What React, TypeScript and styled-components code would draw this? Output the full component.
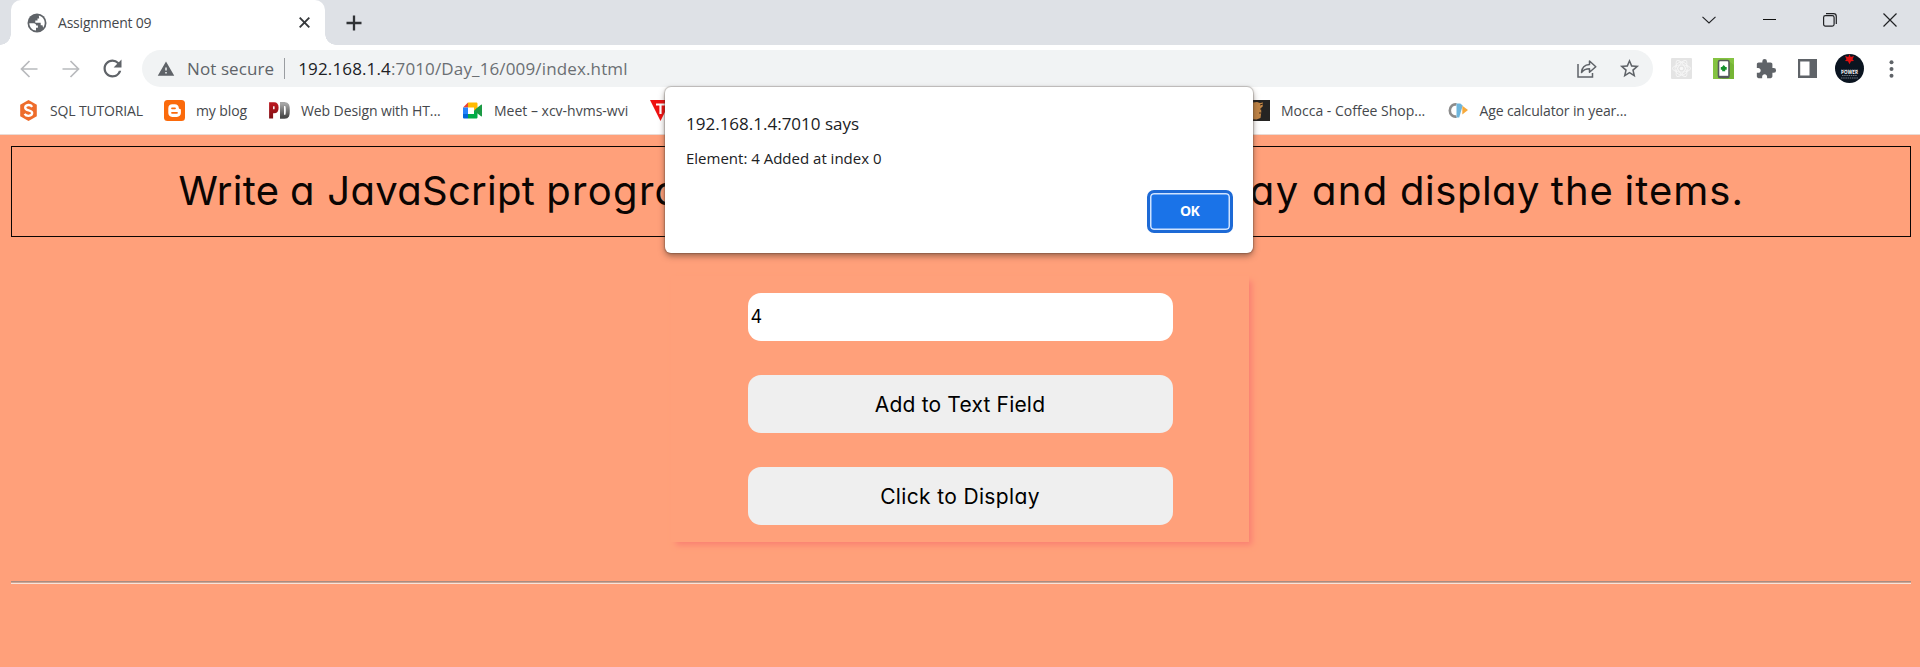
import React from 'react';
import styled, { createGlobalStyle } from 'styled-components';
import { MdRefresh, MdWarning, MdExtension, MdStarBorder } from 'react-icons/md';

const GlobalStyle = createGlobalStyle`
  * { box-sizing: border-box; }
  body { margin: 0; background: #ffa07a; overflow: hidden; }
  svg { display: block; flex: none; }
`;

const uiFont = `"Open Sans", "Noto Sans", sans-serif`;
const pageFont = `Inter, "Open Sans", sans-serif`;

const Window = styled.div`
  position: relative;
  display: flex;
  flex-direction: column;
  height: 667px;
  font-family: ${uiFont};
`;

/* ---- tab strip ---- */
const TabStrip = styled.div`
  display: flex;
  height: 45px;
  padding-left: 11px;
  background: #dee1e6;
`;
const Tab = styled.div`
  position: relative;
  display: flex;
  align-items: center;
  width: 314px;
  padding: 0 15px 0 16px;
  background: #fff;
  border-radius: 10px 10px 0 0;
  &::before, &::after {
    content: '';
    position: absolute;
    bottom: 0;
    width: 11px;
    height: 11px;
  }
  &::before { left: -11px; background: radial-gradient(circle at 0 0, transparent 10.5px, #fff 11px); }
  &::after { right: -11px; background: radial-gradient(circle at 100% 0, transparent 10.5px, #fff 11px); }
`;
const TabTitle = styled.span`
  flex: 1;
  margin-left: 11px;
  font-size: 14px;
  line-height: 20px;
  letter-spacing: -0.2px;
  color: #45484c;
`;
const NewTab = styled.div`
  display: flex;
  align-items: center;
  margin-left: 21px;
`;
const WindowControls = styled.div`
  display: flex;
  align-items: flex-start;
  margin-left: auto;
`;
const WindowButton = styled.div`
  display: flex;
  align-items: center;
  justify-content: center;
  width: 60.3px;
  height: 39px;
`;

/* ---- toolbar ---- */
const Toolbar = styled.div`
  display: flex;
  align-items: center;
  height: 47px;
  padding: 0 7.5px;
  background: #fff;
`;
const ToolSlot = styled.div<{ $color?: string }>`
  display: flex;
  align-items: center;
  justify-content: center;
  width: 42px;
  height: 42px;
  color: ${p => p.$color ?? '#5f6368'};
`;
const Omnibox = styled.div`
  display: flex;
  align-items: center;
  flex: 1;
  height: 37px;
  margin: 0 7.5px 0 8.5px;
  padding: 0 3px 0 15px;
  border-radius: 19px;
  background: #f1f3f4;
  color: #5f6368;
  font-size: 17px;
`;
const Security = styled.span`
  margin-left: 12px;
  letter-spacing: 0.1px;
`;
const Divider = styled.span`
  width: 1px;
  height: 21px;
  margin: 0 13px 0 10px;
  background: #9a9da1;
`;
const Url = styled.span`
  flex: 1;
  letter-spacing: 0.14px;
  color: #6b6f73;
`;
const Host = styled.span`color: #202124;`;
const Avatar = styled.div`
  display: flex;
  width: 29px;
  height: 29px;
  border-radius: 50%;
  overflow: hidden;
  background: #0a1420;
`;

/* ---- bookmarks ---- */
const BookmarkBar = styled.div`
  display: flex;
  align-items: center;
  height: 43px;
  padding: 0 0 5px 18px;
  background: #fff;
  border-bottom: 1px solid #eadbd5;
`;
const Bookmark = styled.div<{ $width: number; $spacing?: number }>`
  display: flex;
  align-items: center;
  gap: 11px;
  width: ${p => p.$width}px;
  font-size: 14px;
  letter-spacing: ${p => p.$spacing ?? 0}px;
  white-space: nowrap;
  color: #45484c;
`;

/* ---- page ---- */
const Page = styled.main`
  flex: 1;
  display: flex;
  flex-direction: column;
  align-items: center;
  padding: 11px 9px 0 11px;
  background: #ffa07a;
  color: #0a0503;
  font-family: ${pageFont};
  font-feature-settings: 'cv11';
`;
const Heading = styled.h1`
  display: flex;
  justify-content: space-between;
  align-self: stretch;
  height: 91px;
  margin: 0;
  padding: 0 166px 0 166.5px;
  border: 1px solid #0a0503;
  font-size: 40px;
  font-weight: 400;
  line-height: 88px;
  white-space: pre;
`;
const Word = styled.span<{ $spacing: number; $gap?: number }>`
  letter-spacing: ${p => p.$spacing}px;
  word-spacing: ${p => p.$gap ?? 0}px;
`;
const Card = styled.section`
  display: flex;
  flex-direction: column;
  align-items: center;
  gap: 34px;
  width: 578px;
  height: 266px;
  margin: 39px 2px 0 0;
  padding-top: 17px;
  box-shadow: 4px 4px 6px -1px salmon;
`;
const Field = styled.input`
  width: 425px;
  height: 48px;
  padding: 0 3px 1px;
  border: 0;
  border-radius: 13px;
  outline: 0;
  background: #fff;
  color: #000;
  font: 400 18px ${pageFont};
`;
const PageButton = styled.button<{ $spacing: number }>`
  width: 425px;
  height: 58px;
  padding: 0;
  border: 0;
  border-radius: 13px;
  background: #efefef;
  color: #000;
  font: 400 21px ${pageFont};
  font-feature-settings: 'cv11';
  letter-spacing: ${p => p.$spacing}px;
`;
const Rule = styled.hr`
  align-self: stretch;
  height: 3px;
  margin: 39px 0 0;
  border: 0;
  border-top: 1px solid #a98b80;
  border-bottom: 1px solid #f7e4da;
  background: #cda592;
`;

/* ---- alert dialog ---- */
const Dialog = styled.div`
  position: absolute;
  top: 87px;
  left: 665px;
  display: flex;
  flex-direction: column;
  width: 588px;
  height: 166px;
  padding: 25px 20px 20px 21px;
  border-radius: 6px;
  background: #fff;
  box-shadow: 0 0 1px 1px rgba(60, 50, 45, 0.25), 0 3px 6px rgba(60, 40, 30, 0.5);
  color: #202124;
`;
const DialogTitle = styled.div`
  font-size: 17px;
  line-height: 24px;
`;
const DialogMessage = styled.div`
  margin-top: 11px;
  font-size: 15px;
  line-height: 22px;
`;
const OkButton = styled.button`
  align-self: flex-end;
  width: 86px;
  height: 43px;
  margin-top: auto;
  padding: 0 1px 2px 0;
  border: 3px solid #1d6ad6;
  border-radius: 7px;
  background: #1a73e8;
  box-shadow: inset 0 0 0 1.5px #cfe3ff;
  color: #fff;
  font: 700 14px ${uiFont};
  letter-spacing: -0.7px;
`;

const GlobeIcon = () => (
  <svg width="20" height="20" viewBox="0 0 20 20">
    <circle cx="10" cy="10" r="9.500" fill="#5f6368" />
    <path d="M2.300 10.200l4.500.1c1.500 0 2.300 1 2.300 2.200h1.800v2.200H9v2.800C5.300 17.300 2.500 14.300 2.300 10.200z" fill="#fff" />
    <path d="M11.800 2.500c3.400.8 5.900 3.700 5.900 7.400 0 1.800-.6 3.500-1.600 4.800l-.6-2.500h-1.800V9.700H8.300V7.600h2.200V5.400h1.700z" fill="#fff" />
  </svg>
);
const ArrowIcon = ({ flip }: { flip?: boolean }) => (
  <svg width="18" height="18" viewBox="0 0 18 18" fill="none" stroke="currentColor" strokeWidth="1.7"
    transform={flip ? 'scale(-1 1)' : undefined}>
    <path d="M17.5 9H2M9.5 1 1.5 9l8 8" />
  </svg>
);
const ShareIcon = () => (
  <svg width="20" height="19" viewBox="0 0 20 19" fill="none" stroke="currentColor" strokeWidth="1.5">
    <path d="M1 5v13h14.5v-4" />
    <path d="M4.5 13.5c.4-5 3-7.600 8-7.900V2l6.300 5.700-6.300 5.600V9.800c-3.600 0-6 1-8 3.700z" strokeLinejoin="round" />
  </svg>
);
const ReactExtension = () => (
  <svg width="21" height="21" viewBox="0 0 21 21">
    <rect width="21" height="21" rx="1" fill="#e4e4e4" />
    <g fill="none" stroke="#f6f6f6" strokeWidth=".9">
      <ellipse cx="10.500" cy="10.500" rx="9" ry="3.600" />
      <ellipse cx="10.500" cy="10.500" rx="9" ry="3.600" transform="rotate(60 10.500 10.500)" />
      <ellipse cx="10.500" cy="10.500" rx="9" ry="3.600" transform="rotate(120 10.500 10.500)" />
      <circle cx="10.500" cy="10.500" r="6.500" />
    </g>
    <circle cx="10.500" cy="10.500" r="1.800" fill="#f8f8f8" />
  </svg>
);
const PhoneExtension = () => (
  <svg width="21" height="21" viewBox="0 0 21 21">
    <rect width="21" height="21" fill="#84c341" />
    <path d="M17 4l4 3v14H9z" fill="#76b535" />
    <rect x="5.500" y="2.500" width="10.500" height="17" rx="1.500" fill="#fff" stroke="#55595c" strokeWidth="1.600" />
    <path d="M5.500 18.800H16" stroke="#55595c" strokeWidth="2" />
    <path d="M10.700 7l1.800 2h1.200v2.800h-1.500v1.400H9.200v-1.400H7.800V9H9z" fill="#14902c" />
  </svg>
);
const SidePanelIcon = () => (
  <svg width="19" height="19" viewBox="0 0 19 19">
    <rect width="19" height="19" fill="#5f6368" />
    <rect x="2.200" y="2.500" width="9.300" height="14" fill="#fff" />
  </svg>
);
const AvatarArt = () => (
  <svg width="29" height="29" viewBox="0 0 29 29">
    <path d="M14.500 0l1.200 3 3.300-1-1.500 3.200 1.500 1.800-3 .2-1.500 3-1.500-3-3-.2L11.500 5.200 10 2l3.300 1z" fill="#e01010" />
    <path d="M6 16h17M7 21.500h15M6 24h17" stroke="#77808a" strokeWidth=".9" strokeDasharray="1.500 .7" />
    <text x="14.500" y="20.300" fill="#fff" fontFamily="Open Sans" fontSize="4.500" fontWeight="700" textAnchor="middle" textLength="17">POWER</text>
  </svg>
);
const MenuDots = () => (
  <svg width="5" height="18" viewBox="0 0 5 18" fill="currentColor">
    <circle cx="2.500" cy="2.300" r="2" /><circle cx="2.500" cy="9" r="2" /><circle cx="2.500" cy="15.700" r="2" />
  </svg>
);

const SqlIcon = () => (
  <svg width="21" height="21" viewBox="0 0 21 21">
    <path d="M10.500 0l8.300 4.800v11.400L10.500 21l-8.300-4.800V4.800z" fill="#ee6c2b" />
    <path d="M14.200 6.800c-1-1.500-2.500-1.900-4-1.800-1.800.2-3 1.200-3 2.700 0 3.600 7 1.800 7 5.400 0 1.600-1.500 2.600-3.500 2.700-1.700.1-3.200-.5-4.100-2" fill="none" stroke="#fff" strokeWidth="2.300" />
  </svg>
);
const BloggerIcon = () => (
  <svg width="21" height="21" viewBox="0 0 21 21">
    <rect width="21" height="21" rx="3.500" fill="#fb6a0b" />
    <path d="M4.300 8.200c0-2.300 1.600-3.900 3.900-3.900h2.700c2.200 0 3.800 1.500 3.900 3.500 0 .9.500 1.100 1.100 1.100.7 0 1 .4 1 1.100v3c0 2.200-1.700 3.900-4 3.900H8.200c-2.300 0-3.900-1.700-3.900-3.900z" fill="#fff" />
    <path d="M8 8.300h3M8 12.800h5" stroke="#fb6a0b" strokeWidth="1.800" strokeLinecap="round" />
  </svg>
);
const PdIcon = () => (
  <svg width="21" height="21" viewBox="0 0 21 21">
    <defs>
      <linearGradient id="pdRed" x2="0" y2="1"><stop stopColor="#b8161e" /><stop offset="1" stopColor="#7e1015" /></linearGradient>
      <linearGradient id="pdGray" x2="0" y2="1"><stop stopColor="#a5a5a5" /><stop offset="1" stopColor="#484848" /></linearGradient>
    </defs>
    <path d="M2.100 18.500V4.200h3c2 0 2.500 1 2.500 3.500s-.5 3.600-2.500 3.600h-3" fill="none" stroke="url(#pdRed)" strokeWidth="4" />
    <path d="M13 4h2.500c2.800 0 3.300 1.500 3.300 6.500s-.5 6.300-3.300 6.300H13z" fill="none" stroke="url(#pdGray)" strokeWidth="4" />
  </svg>
);
const MeetIcon = () => (
  <svg width="21" height="21" viewBox="0 0 21 21">
    <path d="M1 7.500L6 2.500v5z" fill="#ea4335" />
    <path d="M1 7.500h5V14H1z" fill="#2684fc" />
    <path d="M1 14h5v4.500H2.300C1.500 18.500 1 18 1 17.200z" fill="#0066da" />
    <path d="M6 2.500h8c1 0 1.500.5 1.500 1.300V9L12 10.500v-3H6z" fill="#ffba00" />
    <path d="M6 14h6v-3.500l3.500 1.500v5.200c0 .8-.5 1.300-1.500 1.300H6z" fill="#00ac47" />
    <path d="M12 10.500l3.500-3L19 4.800c.6-.4 1-.1 1 .5v10.400c0 .6-.5.900-1 .5L15.500 13.500z" fill="#1b9a44" />
  </svg>
);
const TriangleIcon = () => (
  <svg width="21" height="21" viewBox="0 0 21 21">
    <path d="M0 0h21L10.500 21z" fill="#ee1111" />
    <path d="M6 4.500h9M10.500 4.500V14" stroke="#fff" strokeWidth="2.200" />
  </svg>
);
const MoccaIcon = () => (
  <svg width="21" height="21" viewBox="0 0 21 21">
    <rect width="21" height="21" fill="#252423" />
    <path d="M0 3l8-1 3 1 3-.5-.3 4-1.700 1.500.3 4L11.500 18l-4 1.500-7.500-.5z" fill="#c08546" />
    <path d="M11 5l3-1M11 9h1.500M10 13h2.500" stroke="#3a2717" />
  </svg>
);
const AgeIcon = () => (
  <svg width="21" height="21" viewBox="0 0 21 21">
    <path d="M8.500 4.500C5 3.700 1.800 6.500 1.800 10.500s3.200 6.800 6.700 6" fill="none" stroke="#8c8c8c" strokeWidth="2.600" />
    <path d="M8.500 3.500h3.800l2.400 2-3.500 12H8.500z" fill="#6db5dc" />
    <path d="M14.300 5.800L20 10l-5.700 4.500z" fill="#f6a93b" />
  </svg>
);

const bookmarks = [
  { icon: <SqlIcon />, label: 'SQL TUTORIAL', width: 146, spacing: -0.15 },
  { icon: <BloggerIcon />, label: 'my blog', width: 105, spacing: -0.1 },
  { icon: <PdIcon />, label: 'Web Design with HT...', width: 193, spacing: -0.1 },
  { icon: <MeetIcon />, label: 'Meet – xcv-hvms-wvi', width: 188, spacing: 0 },
  { icon: <TriangleIcon />, label: '', width: 599, spacing: 0 },
  { icon: <MoccaIcon />, label: 'Mocca - Coffee Shop...', width: 198.500, spacing: 0 },
  { icon: <AgeIcon />, label: 'Age calculator in year...', width: 200, spacing: -0.13 },
];

export default function App() {
  return (
    <Window>
      <GlobalStyle />
      <TabStrip>
        <Tab>
          <GlobeIcon />
          <TabTitle>Assignment 09</TabTitle>
          <svg width="11" height="11" viewBox="0 0 11 11" stroke="#35383b" strokeWidth="1.900"><path d="M.7.7l9.600 9.600M10.300.7L.7 10.300" /></svg>
        </Tab>
        <NewTab>
          <svg width="16" height="16" viewBox="0 0 16 16" stroke="#303336" strokeWidth="2.300"><path d="M8 .5v15M.5 8h15" /></svg>
        </NewTab>
        <WindowControls>
          <WindowButton><svg width="14" height="8" viewBox="0 0 14 8" fill="none" stroke="#202124" strokeWidth="1.100"><path d="M.5.8L7 7 13.500.8" /></svg></WindowButton>
          <WindowButton><svg width="13" height="1"><rect width="13" height="1" fill="#111" /></svg></WindowButton>
          <WindowButton>
            <svg width="14" height="14" viewBox="0 0 14 14" fill="none" stroke="#202124" strokeWidth="1.200">
              <rect x=".6" y="2.600" width="10.500" height="10.500" rx="1.800" /><path d="M3 .7h7.500c1.800 0 2.800 1.100 2.800 2.800V11" />
            </svg>
          </WindowButton>
          <WindowButton><svg width="14" height="14" viewBox="0 0 14 14" stroke="#202124" strokeWidth="1.200"><path d="M.5.5l13 13M13.500.5l-13 13" /></svg></WindowButton>
        </WindowControls>
      </TabStrip>

      <Toolbar>
        <ToolSlot $color="#b8babd"><ArrowIcon /></ToolSlot>
        <ToolSlot $color="#b8babd"><ArrowIcon flip /></ToolSlot>
        <ToolSlot><MdRefresh size={27} /></ToolSlot>
        <Omnibox>
          <MdWarning size={18} />
          <Security>Not secure</Security>
          <Divider />
          <Url><Host>192.168.1.4</Host>:7010/Day_16/009/index.html</Url>
          <ToolSlot><ShareIcon /></ToolSlot>
          <ToolSlot><MdStarBorder size={23} /></ToolSlot>
        </Omnibox>
        <ToolSlot><ReactExtension /></ToolSlot>
        <ToolSlot><PhoneExtension /></ToolSlot>
        <ToolSlot><MdExtension size={22} /></ToolSlot>
        <ToolSlot><SidePanelIcon /></ToolSlot>
        <ToolSlot><Avatar><AvatarArt /></Avatar></ToolSlot>
        <ToolSlot><MenuDots /></ToolSlot>
      </Toolbar>

      <BookmarkBar>
        {bookmarks.map((b, i) => (
          <Bookmark key={i} $width={b.width} $spacing={b.spacing}>{b.icon}{b.label}</Bookmark>
        ))}
      </BookmarkBar>

      <Page>
        <Heading>
          <span>
            <Word $spacing={0.3} $gap={-1}>Write </Word>
            <Word $spacing={2} $gap={-2.5}>a </Word>
            <Word $spacing={0.3} $gap={-0.5}>JavaScript </Word>
            <Word $spacing={1.3}>program </Word>
            <Word $spacing={0}>to add items in a blank</Word>
          </span>
          <span>
            <Word $spacing={1.5} $gap={-0.5}>array </Word>
            <Word $spacing={1.3} $gap={-1}>and </Word>
            <Word $spacing={0.5} $gap={-1}>display </Word>
            <Word $spacing={1} $gap={-1.5}>the </Word>
            <Word $spacing={1}>items.</Word>
          </span>
        </Heading>
        <Card>
          <Field defaultValue="4" />
          <PageButton $spacing={0.18}>Add to Text Field</PageButton>
          <PageButton $spacing={0.35}>Click to Display</PageButton>
        </Card>
        <Rule />
      </Page>

      <Dialog>
        <DialogTitle>192.168.1.4:7010 says</DialogTitle>
        <DialogMessage>Element: 4 Added at index 0</DialogMessage>
        <OkButton>OK</OkButton>
      </Dialog>
    </Window>
  );
}
